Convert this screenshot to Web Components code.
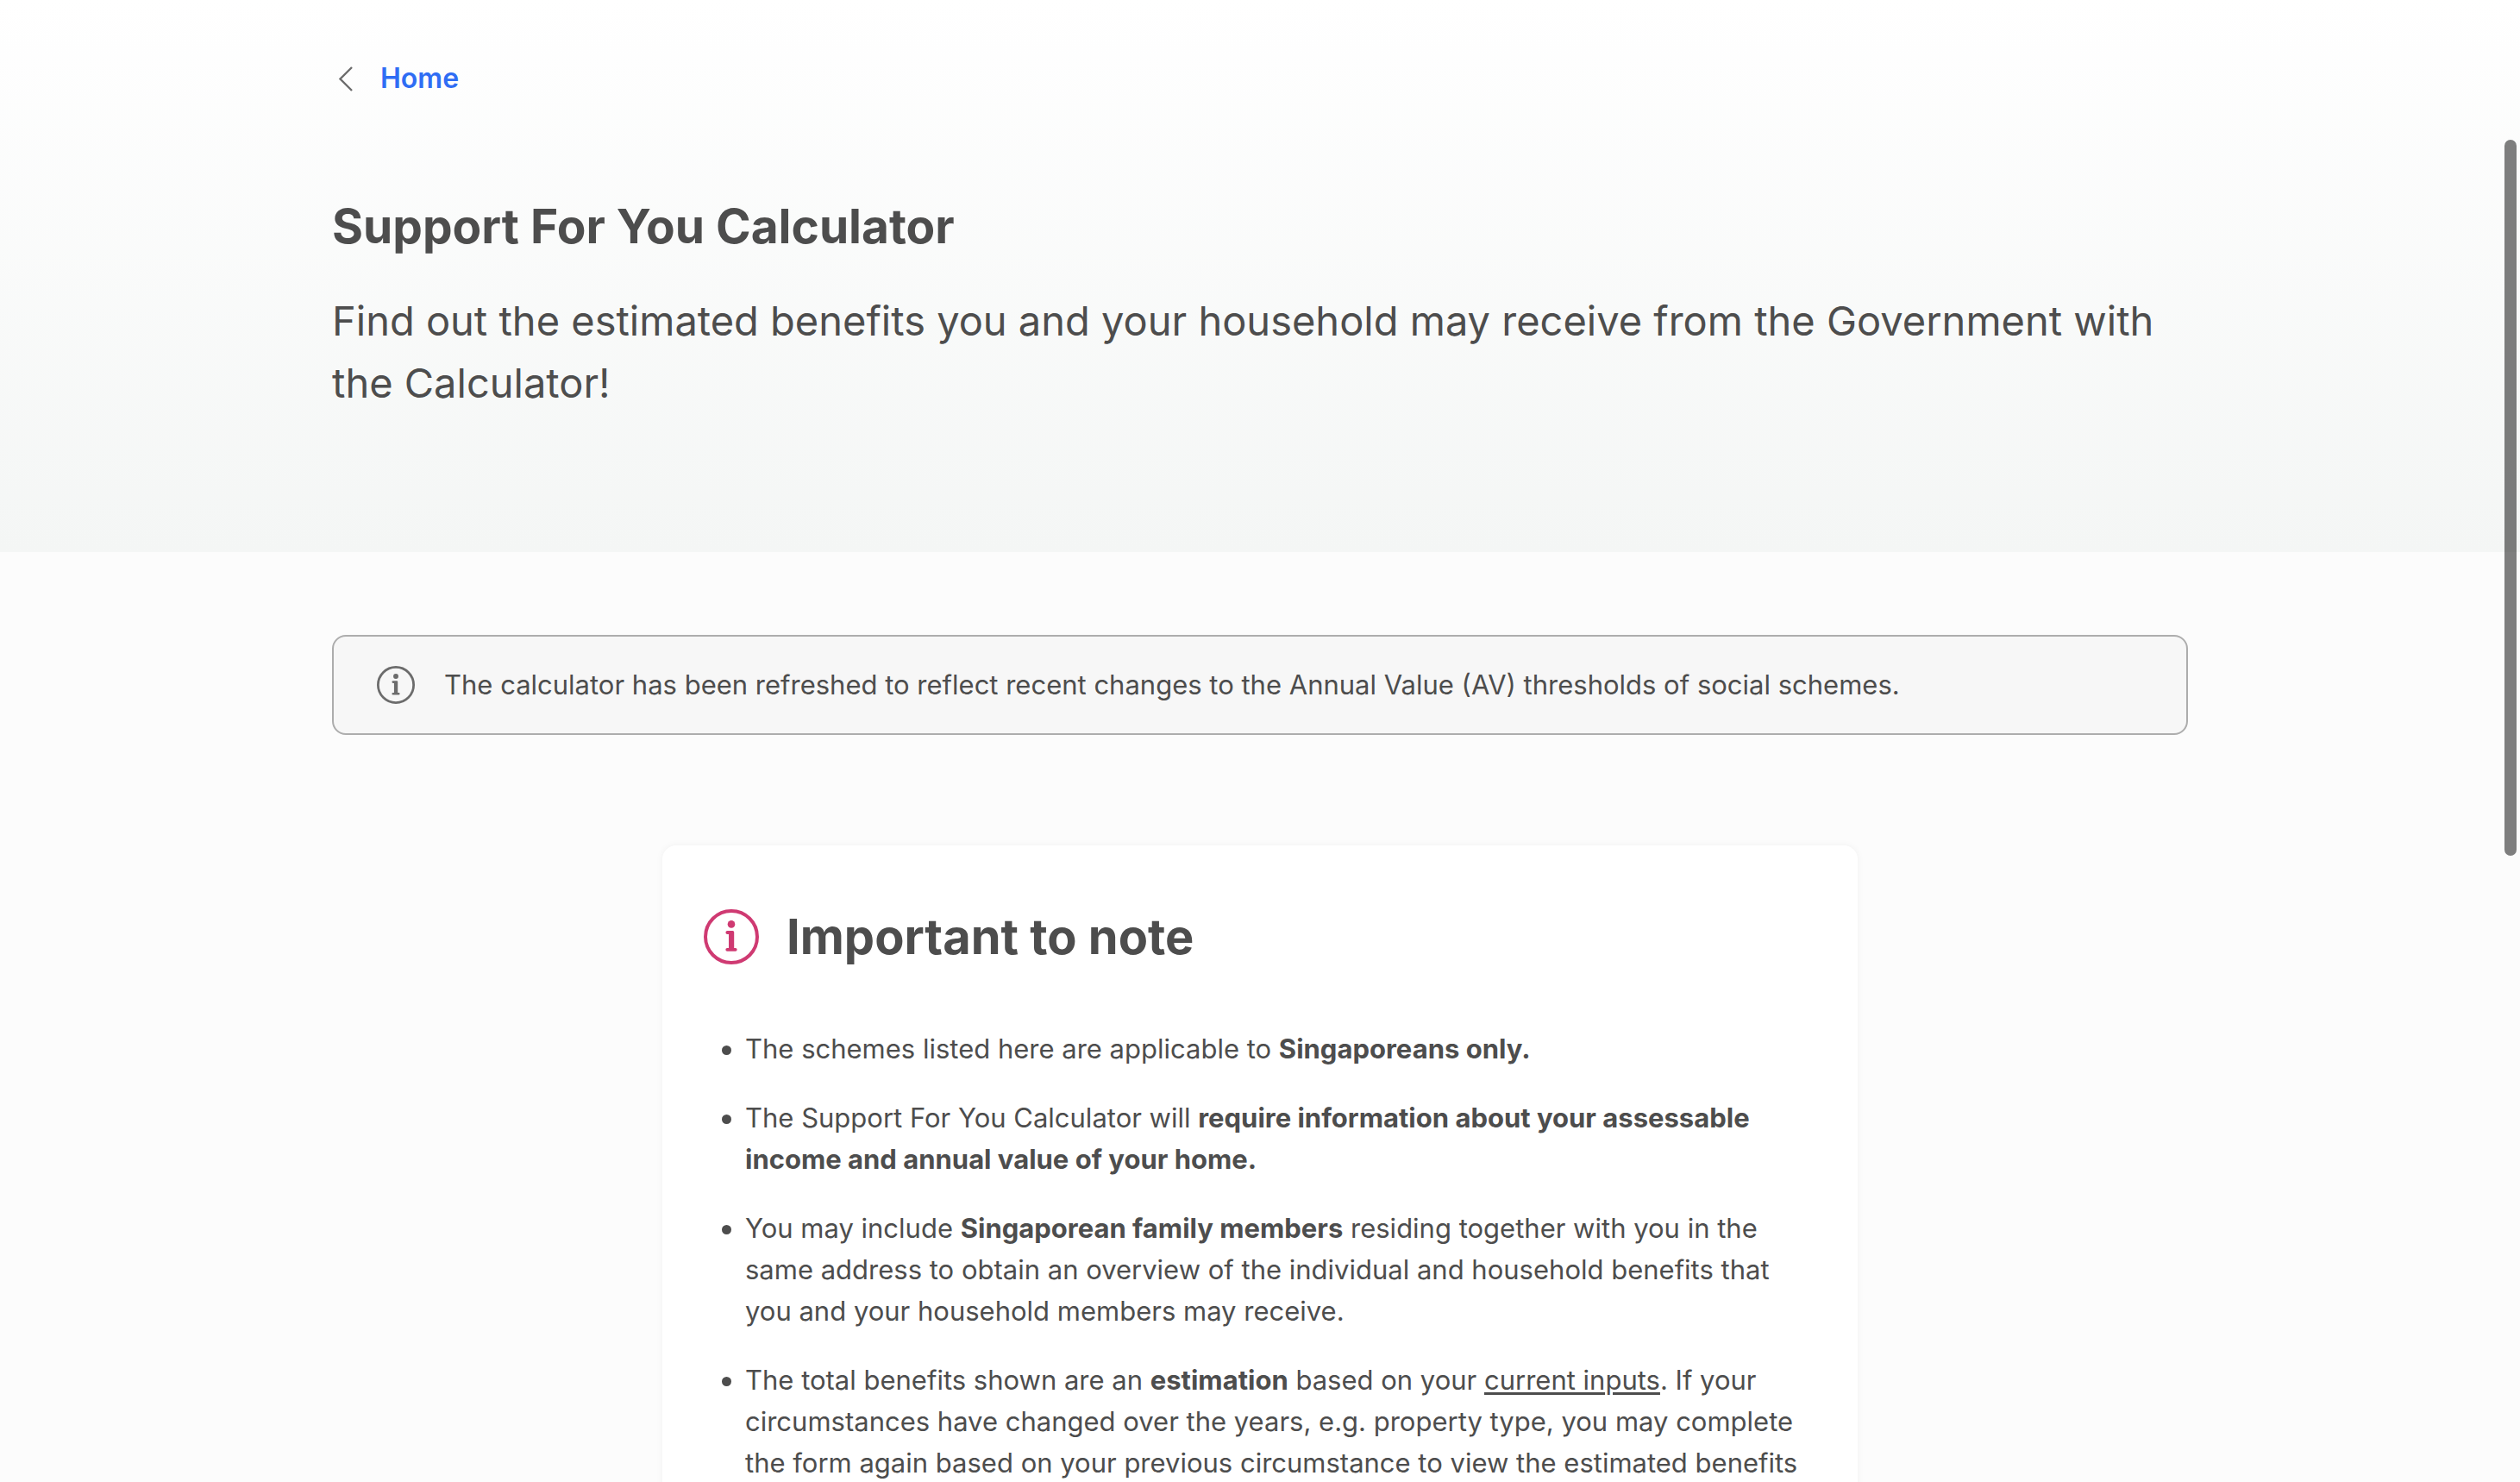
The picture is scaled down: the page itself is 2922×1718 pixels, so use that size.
<!DOCTYPE html>
<html lang="en">
<head>
<meta charset="utf-8">
<meta name="viewport" content="width=device-width, initial-scale=1">
<title>Support For You Calculator</title>
<style>
  body {
    margin: 0;
    background: #fcfcfc;
    color: #4d4d4d;
    font: 400 31px/48px Inter, "Liberation Sans", sans-serif;
    --ink-soft: #6c6c6c;
    --link: #2f6df4;
    --accent: #cf3a72;
    --gutter: 48px;
  }
  u { text-decoration-thickness: 3px; text-underline-offset: 3px; }
</style>
</head>
<body>
<calc-page>
  <page-hero slot="hero" heading="Support For You Calculator">
    <back-link slot="nav" href="#home">Home</back-link>
    Find out the estimated benefits you and your household may receive from the Government with the Calculator!
  </page-hero>
  <notice-bar>The calculator has been refreshed to reflect recent changes to the Annual Value (AV) thresholds of social schemes.</notice-bar>
  <note-card heading="Important to note">
    <note-item>The schemes listed here are applicable to <b>Singaporeans only.</b></note-item>
    <note-item>The Support For You Calculator will <b>require information about your assessable income and annual value of your home.</b></note-item>
    <note-item>You may include <b>Singaporean family members</b> residing together with you in the same address to obtain an overview of the individual and household benefits that you and your household members may receive.</note-item>
    <note-item>The total benefits shown are an <b>estimation</b> based on your <u>current inputs</u>. If your circumstances have changed over the years, e.g. property type, you may complete the form again based on your previous circumstance to view the estimated benefits</note-item>
  </note-card>
</calc-page>

<script>
function define(name, markup, ready) {
  const template = document.createElement('template');
  template.innerHTML = markup;
  customElements.define(name, class extends HTMLElement {
    constructor() {
      super();
      this.attachShadow({ mode: 'open' }).append(template.content.cloneNode(true));
    }
    connectedCallback() {
      if (ready) ready(this, this.shadowRoot);
    }
  });
}

define('info-icon', `
  <style>
    :host { display: block; flex: none; width: 44px; height: 44px; }
    svg { display: block; width: 100%; height: 100%; }
  </style>
  <svg viewBox="0 0 64 64" fill="none" stroke="currentColor" aria-hidden="true">
    <circle cx="32" cy="32" r="30" stroke-width="4"/>
    <circle cx="32" cy="17.4" r="4.3" fill="currentColor" stroke="none"/>
    <path fill="currentColor" stroke="none" d="M27.4 25h6.2a1.6 1.6 0 0 1 1.6 1.6V45h1.6a1.8 1.8 0 0 1 0 3.7h-9.6a1.8 1.8 0 0 1 0-3.7H29V29h-1.6a2 2 0 0 1 0-4z"/>
  </svg>`);

define('back-link', `
  <style>
    :host { display: block; }
    a { display: flex; width: fit-content; align-items: center; gap: 24px; color: var(--link); font-size: 32px; font-weight: 600; text-decoration: none; }
    svg { width: 32px; height: 32px; color: var(--ink-soft); }
  </style>
  <a><svg viewBox="0 0 32 32" fill="none" stroke="currentColor" stroke-width="2.4" aria-hidden="true"><path d="M23 3 9.5 16.5 23 30"/></svg><slot></slot></a>`,
  (host, root) => { root.querySelector('a').href = host.getAttribute('href'); });

define('page-hero', `
  <style>
    :host { display: block; background: linear-gradient(#fff, #f4f6f5); }
    .inner { box-sizing: border-box; max-width: 2248px; margin: 0 auto; padding: 67px var(--gutter) 160px; }
    h1 { margin: 109px 0 36px; font-size: 55px; line-height: 76px; font-weight: 700; }
    p { margin: 0; font-size: 47px; line-height: 72px; }
  </style>
  <header class="inner">
    <nav><slot name="nav"></slot></nav>
    <h1></h1>
    <p><slot></slot></p>
  </header>`,
  (host, root) => { root.querySelector('h1').textContent = host.getAttribute('heading'); });

define('notice-bar', `
  <style>
    :host { display: flex; align-items: center; gap: 34px; padding: 32px 50px; border: 2px solid #adadad; border-radius: 16px; background: #f7f7f7; }
    info-icon { color: var(--ink-soft); }
    p { margin: 0; }
  </style>
  <info-icon></info-icon><p><slot></slot></p>`);

define('note-item', `
  <style>
    :host { display: flex; gap: 16px; }
    .dot { flex: none; width: 11px; height: 11px; margin-top: 20px; margin-left: 21px; border-radius: 50%; background: currentColor; }
    p { margin: 0; }
  </style>
  <span class="dot"></span><p><slot></slot></p>`,
  host => host.setAttribute('role', 'listitem'));

define('note-card', `
  <style>
    :host { display: block; box-sizing: border-box; width: 100%; max-width: 1386px; margin: 0 auto; padding: 68px var(--gutter); border-radius: 16px; background: #fff; box-shadow: 0 0 8px rgba(0, 0, 0, .05); }
    header { display: flex; align-items: center; gap: 32px; margin-bottom: 68px; }
    info-icon { width: 64px; height: 64px; color: var(--accent); }
    h2 { margin: 0; font-size: 56px; line-height: 76px; font-weight: 700; }
    .list { display: flex; flex-direction: column; gap: 32px; }
  </style>
  <header><info-icon></info-icon><h2></h2></header>
  <div class="list" role="list"><slot></slot></div>`,
  (host, root) => { root.querySelector('h2').textContent = host.getAttribute('heading'); });

define('scroll-thumb', `
  <style>
    :host { position: fixed; top: 162px; right: 4px; width: 14px; height: 830px; border-radius: 7px; background: rgba(0, 0, 0, .5); }
  </style>`);

define('calc-page', `
  <style>
    :host { display: block; height: 100vh; overflow: hidden; }
    main { box-sizing: border-box; max-width: 2248px; margin: 0 auto; padding: 96px var(--gutter); display: flex; flex-direction: column; gap: 128px; }
  </style>
  <slot name="hero"></slot>
  <main><slot></slot></main>
  <scroll-thumb></scroll-thumb>`);
</script>
</body>
</html>
